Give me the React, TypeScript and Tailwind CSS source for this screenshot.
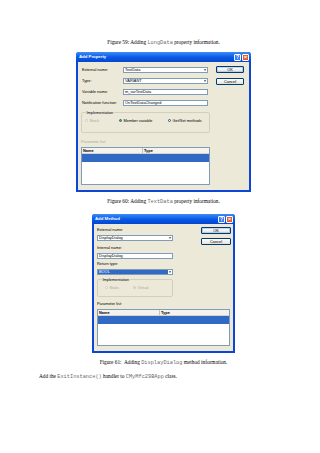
import React from "react";

function Code({ children }: { children: React.ReactNode }) {
  return <span className="font-['Liberation_Mono',monospace] text-[#6b6b6b]">{children}</span>;
}

function TitleBar({ title }: { title: string }) {
  return (
    <div className="h-[10px] flex items-center justify-between pl-[3px] pr-[2px] bg-linear-to-b from-[#3c8cf6] via-[#0a5ae6] to-[#0447cf] rounded-t-[3px]">
      <span className="text-white font-bold text-[4.3px] leading-none">{title}</span>
      <div className="flex gap-[1px]">
        <div className="w-[7px] h-[7px] rounded-[1px] border border-white bg-[#3a7cf2] text-white text-[5px] font-bold flex items-center justify-center leading-none">?</div>
        <div className="w-[7px] h-[7px] rounded-[1px] border border-white bg-[#e1582e] text-white text-[6px] font-bold flex items-center justify-center leading-none">×</div>
      </div>
    </div>
  );
}

function Field({ value, combo, selected, w }: { value: string; combo?: boolean; selected?: boolean; w: string }) {
  return (
    <div className={`${w} h-[6px] bg-white border border-[#7f9db9] flex items-center`}>
      <div className={`flex-1 h-full flex items-center px-[1px] text-[3.9px] leading-none ${selected ? "bg-[#316ac5] text-white" : "text-black"}`}>{value}</div>
      {combo && (
        <div className="w-[4px] h-full bg-white flex items-center justify-center text-[3px] leading-none text-black">▼</div>
      )}
    </div>
  );
}

function Btn({ label, focus, cls }: { label: string; focus?: boolean; cls: string }) {
  return (
    <div className={`${cls} h-[7px] rounded-[1px] border border-[#003c74] bg-linear-to-b from-white to-[#e3e3db] flex items-center justify-center text-[3.9px] leading-none text-black ${focus ? "shadow-[inset_0_0_0_0.6px_#8db2f0]" : ""}`}>
      {label}
    </div>
  );
}

function Radio({ label, checked, disabled, cls }: { label: string; checked?: boolean; disabled?: boolean; cls: string }) {
  return (
    <div className={`${cls} flex items-center gap-[1.5px]`}>
      <div className={`w-[3px] h-[3px] rounded-full border-[0.6px] ${disabled ? "border-[#c9c7ba]" : "border-[#1c5180]"} bg-white flex items-center justify-center`}>
        {checked && <div className={`w-[1.4px] h-[1.4px] rounded-full ${disabled ? "bg-[#c9c7ba]" : "bg-[#21a121]"}`} />}
      </div>
      <span className={`text-[3.9px] leading-none ${disabled ? "text-[#aca899]" : "text-black"}`}>{label}</span>
    </div>
  );
}

function Label({ children, cls = "", gray }: { children: React.ReactNode; cls?: string; gray?: boolean }) {
  return <div className={`${cls} text-[3.9px] leading-none h-[4px] flex items-center whitespace-nowrap ${gray ? "text-[#aca899]" : "text-black"}`}>{children}</div>;
}

function ListBox({ h, nameW }: { h: string; nameW: string }) {
  return (
    <div className={`${h} bg-white border border-[#7f9db9] flex flex-col`}>
      <div className="h-[6px] flex bg-[#f4f3ee] border-b border-[#d6d3ce]">
        <div className={`${nameW} border-r border-[#c7c5b2] flex items-center pl-[1px] text-[3.9px] font-bold leading-none`}>Name</div>
        <div className="flex-1 flex items-center pl-[1px] text-[3.9px] font-bold leading-none">Type</div>
      </div>
      <div className="h-[8px] bg-[#316ac5]" />
    </div>
  );
}

function GroupBox({ children, h, w }: { children: React.ReactNode; h: string; w: string }) {
  return (
    <fieldset className={`${w} ${h} border border-[#d0d0bf] rounded-[2px] pl-[2px]`}>
      <legend className="text-[3.9px] leading-none text-black ml-[2px] px-[0.5px]">Implementation</legend>
      {children}
    </fieldset>
  );
}

function AddProperty() {
  return (
    <div className="w-[175px] h-[140px] flex flex-col bg-[#0b47d4] rounded-t-[3px]">
      <TitleBar title="Add Property" />
      <div className="flex-1 mx-[2px] mb-[2px] bg-[#ece9d8] pl-[3px] pt-[5px] flex flex-col">
        <div className="flex">
          <div className="w-[129px] flex flex-col gap-[5px]">
            {[
              ["External name:", "TextData", true],
              ["Type:", "VARIANT", true],
              ["Variable name:", "m_varTextData", false],
              ["Notification function:", "OnTextDataChanged", false],
            ].map(([l, v, c]) => (
              <div key={l as string} className="flex items-center h-[6px]">
                <div className="w-[42px] pl-[1px] text-[3.9px] leading-none whitespace-nowrap">{l as string}</div>
                <Field value={v as string} combo={c as boolean} w="w-[85px]" />
              </div>
            ))}
          </div>
          <div className="flex flex-col ml-[6px] -mt-[1px]">
            <Btn label="OK" focus cls="w-[28px]" />
            <Btn label="Cancel" cls="w-[28px] mt-[5px]" />
          </div>
        </div>
        <div className="mt-[5px]">
          <GroupBox w="w-[129px]" h="h-[22px]">
            <div className="flex items-center mt-[4px]">
              <Radio label="Stock" disabled cls="w-[35px] pl-[1px]" />
              <Radio label="Member variable" checked cls="w-[49px]" />
              <Radio label="Get/Set methods" cls="" />
            </div>
          </GroupBox>
        </div>
        <Label gray cls="mt-[7px]">Parameter list:</Label>
        <div className="mt-[3px]">
          <div className="w-[129px]">
            <ListBox h="h-[38px]" nameW="w-[61px]" />
          </div>
        </div>
      </div>
    </div>
  );
}

function AddMethod() {
  return (
    <div className="w-[143px] h-[139px] flex flex-col bg-[#0b47d4] rounded-t-[3px]">
      <TitleBar title="Add Method" />
      <div className="flex-1 mx-[2px] mb-[2px] bg-[#ece9d8] pl-[3px] flex flex-col">
        <div className="flex">
          <div className="w-[76px] flex flex-col pt-[4px]">
            <Label>External name:</Label>
            <div className="mt-[3px]"><Field value="DisplayDialog" combo w="w-[76px]" /></div>
            <Label cls="mt-[5px]">Internal name:</Label>
            <div className="mt-[3px]"><Field value="DisplayDialog" w="w-[76px]" /></div>
            <Label cls="mt-[3px]">Return type:</Label>
            <div className="mt-[3px]"><Field value="BOOL" combo selected w="w-[76px]" /></div>
          </div>
          <div className="flex flex-col ml-[28px] pt-[3px]">
            <Btn label="OK" focus cls="w-[30px]" />
            <Btn label="Cancel" cls="w-[30px] mt-[4px]" />
          </div>
        </div>
        <div className="mt-[3px]">
          <GroupBox w="w-[76px]" h="h-[19px]">
            <div className="flex items-center mt-[4px]">
              <Radio label="Static" disabled cls="w-[33px] pl-[5px]" />
              <Radio label="Virtual" checked disabled cls="" />
            </div>
          </GroupBox>
        </div>
        <Label cls="mt-[5px]">Parameter list:</Label>
        <div className="mt-[3px] w-[133px]">
          <ListBox h="h-[37px]" nameW="w-[62px]" />
        </div>
      </div>
    </div>
  );
}

export default function App() {
  return (
    <div className="w-[320px] h-[453px] bg-white overflow-hidden flex flex-col items-center pl-[7px] font-['Liberation_Sans',Arial,sans-serif] text-black">
      <div className="mt-[40px] h-[5px] text-[5.3px] leading-[5px] whitespace-nowrap font-['Liberation_Serif',serif]">
        Figure 59: Adding <Code>LongData</Code> property information.
      </div>
      <div className="mt-[7px]"><AddProperty /></div>
      <div className="mt-[7px] h-[5px] text-[5.3px] leading-[5px] whitespace-nowrap font-['Liberation_Serif',serif]">
        Figure 60: Adding <Code>TextData</Code> property information.
      </div>
      <div className="mt-[10px]"><AddMethod /></div>
      <div className="mt-[7px] h-[5px] text-[5.3px] leading-[5px] whitespace-pre font-['Liberation_Serif',serif]">
        Figure 61:  Adding <Code>DisplayDialog</Code> method information.
      </div>
      <div className="self-start ml-[32px] mt-[9px] h-[5px] text-[5.3px] leading-[5px] whitespace-nowrap font-['Liberation_Serif',serif]">
        Add the <Code>ExitInstance()</Code> handler to <Code>CMyMfc29BApp</Code> class.
      </div>
    </div>
  );
}
